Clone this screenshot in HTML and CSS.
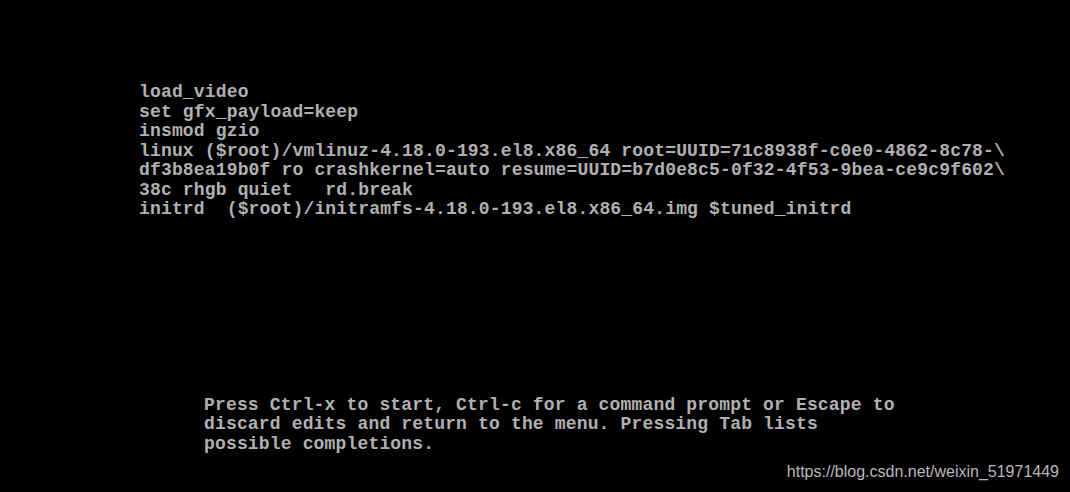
FILE: index.html
```html
<!DOCTYPE html>
<html>
<head>
<meta charset="utf-8">
<link rel="stylesheet" href="styles.css">
</head>
<body>
<div class="screen">
  <pre class="editor">load_video
set gfx_payload=keep
insmod gzio
linux ($root)/vmlinuz-4.18.0-193.el8.x86_64 root=UUID=71c8938f-c0e0-4862-8c78-\
df3b8ea19b0f ro crashkernel=auto resume=UUID=b7d0e8c5-0f32-4f53-9bea-ce9c9f602\
38c rhgb quiet   rd.break
initrd  ($root)/initramfs-4.18.0-193.el8.x86_64.img $tuned_initrd</pre>
  <pre class="help">Press Ctrl-x to start, Ctrl-c for a command prompt or Escape to
discard edits and return to the menu. Pressing Tab lists
possible completions.</pre>
  <div class="watermark">https://blog.csdn.net/weixin_51971449</div>
</div>
</body>
</html>
```
FILE: styles.css
```css
html, body {
  margin: 0;
  padding: 0;
  background: #000;
}
.screen {
  position: relative;
  width: 1070px;
  height: 492px;
  display: flex;
  flex-direction: column;
  padding: 83px 0 0 139px;
  box-sizing: border-box;
  background: #000;
}
.editor, .help {
  margin: 0;
  font-family: "Liberation Mono", "DejaVu Sans Mono", monospace;
  font-size: 18px;
  font-weight: bold;
  letter-spacing: 0.16px;
  line-height: 19.5px;
  color: #b0b0b0;
  white-space: pre;
}
.help {
  margin-top: 176px;
  margin-left: 65px;
}
.watermark {
  position: absolute;
  right: 11px;
  bottom: 11px;
  font-family: "Liberation Sans", Arial, sans-serif;
  font-size: 16px;
  color: #b8b8b8;
}
```
